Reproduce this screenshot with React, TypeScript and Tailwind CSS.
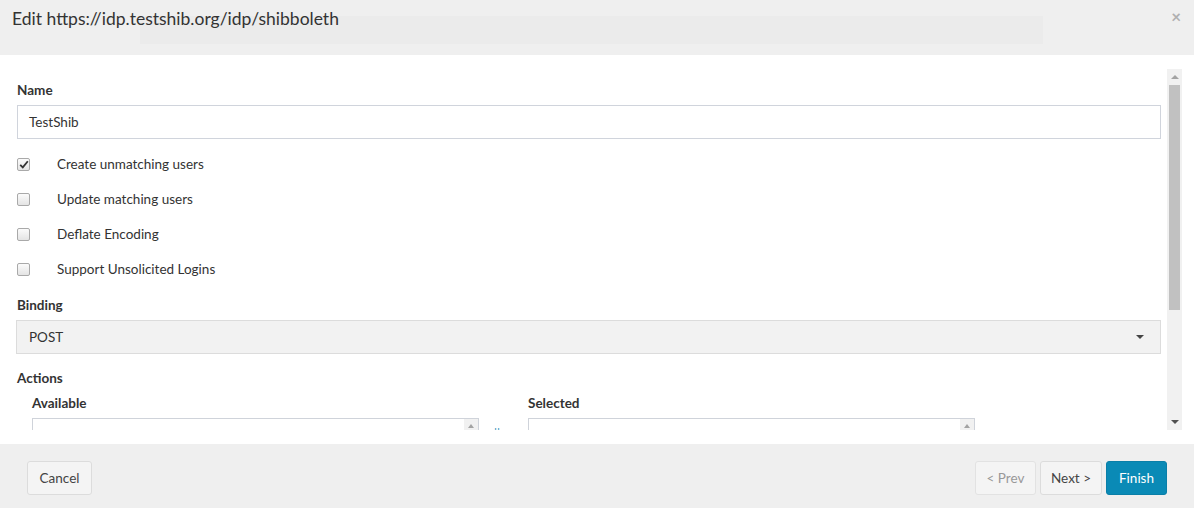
import React from 'react';

const checks = [
  { label: 'Create unmatching users', checked: true },
  { label: 'Update matching users', checked: false },
  { label: 'Deflate Encoding', checked: false },
  { label: 'Support Unsolicited Logins', checked: false },
];

const Box: React.FC<{ checked: boolean }> = ({ checked }) => (
  <span className="flex h-[13px] w-[13px] items-center justify-center rounded-[2px] border border-[#a9a9a9] bg-gradient-to-b from-[#fbfbfb] to-[#e4e4e4]">
    {checked && (
      <svg width="10" height="9" viewBox="0 0 10 9">
        <path d="M1.2 4.8 L3.8 7.4 L8.8 1.2" fill="none" stroke="#333" strokeWidth="1.8" />
      </svg>
    )}
  </span>
);

const ListBox: React.FC<{ text?: string }> = ({ text }) => (
  <div className="relative h-[60px] w-[447px] overflow-hidden border border-[#cfd3da] bg-white">
    {text && <div className="pl-2 pr-[20px] pt-[8px] text-[13px] text-[#555] whitespace-nowrap overflow-hidden">{text}</div>}
    <div className="absolute right-0 top-0 flex h-[14px] w-[14px] items-center justify-center bg-[#f1f1f1]">
      <span className="border-x-[3.5px] border-b-[4px] border-x-transparent border-b-[#a3a3a3]" />
    </div>
  </div>
);

export default function App() {
  return (
    <div className="flex h-[508px] w-[1194px] flex-col bg-white text-[#333]" style={{ fontFamily: 'Lato, "Liberation Sans", sans-serif' }}>
      {/* header */}
      <div className="relative flex h-[55px] shrink-0 items-start bg-[#efefef] px-[12px] pt-[7px]">
        <div className="absolute left-[140px] top-[16px] h-[28px] w-[903px] bg-[#ebebeb]" />
        <h4 className="relative text-[17.5px] leading-[24px] text-[#333]">Edit https://idp.testshib.org/idp/shibboleth</h4>
        <span className="absolute right-[13px] top-[4px] text-[17px] font-bold text-[#b0b0b0]">×</span>
      </div>

      {/* body */}
      <div className="flex h-[389px] shrink-0 px-[12px] pt-[14px]">
        <div className="h-[361px] flex-1 overflow-hidden pl-[5px] pr-[6px] pt-[11px]">
          <div className="text-[13.5px] font-bold leading-[20px]">Name</div>
          <div className="mt-[5px] flex h-[34px] items-center border border-[#d0d4dc] px-[11px] text-[13.5px]">TestShib</div>

          <div className="mt-[8px]">
            {checks.map((c) => (
              <div key={c.label} className="flex h-[35px] items-center">
                <Box checked={c.checked} />
                <span className="ml-[27px] text-[13.5px]">{c.label}</span>
              </div>
            ))}
          </div>

          <div className="mt-[8px] text-[13.5px] font-bold leading-[20px]">Binding</div>
          <div className="mt-[5px] -ml-px flex h-[34px] items-center justify-between border border-[#dcdcdc] bg-[#f2f2f2] pl-[12px] pr-[16px] text-[13.5px]">
            <span>POST</span>
            <span className="border-x-[4px] border-t-[4px] border-x-transparent border-t-[#444]" />
          </div>

          <div className="mt-[14px] text-[13.5px] font-bold leading-[20px]">Actions</div>
          <div className="mt-[5px] flex pl-[15px]">
            <div>
              <div className="text-[13.5px] font-bold leading-[20px]">Available</div>
              <div className="mt-[5px]">
                <ListBox text="manage-account  view-profile  manage-account-links  uma_authorization  offline_access" />
              </div>
            </div>
            <div className="ml-[15px] pt-[32px] text-[12px] leading-[16px] text-[#1a8ab5]">||</div>
            <div className="ml-[28px]">
              <div className="text-[13.5px] font-bold leading-[20px]">Selected</div>
              <div className="mt-[5px]">
                <ListBox />
              </div>
            </div>
          </div>
        </div>

        {/* scrollbar */}
        <div className="flex h-[361px] w-[15px] shrink-0 flex-col items-center bg-[#f1f1f1]">
          <div className="flex h-[16px] items-center justify-center">
            <span className="border-x-[4px] border-b-[4px] border-x-transparent border-b-[#a3a3a3]" />
          </div>
          <div className="h-[225px] w-[11px] bg-[#c1c1c1]" />
          <div className="flex-1" />
          <div className="flex h-[16px] items-center justify-center">
            <span className="border-x-[4px] border-t-[4px] border-x-transparent border-t-[#505050]" />
          </div>
        </div>
      </div>

      {/* footer */}
      <div className="flex flex-1 items-start justify-between bg-[#efefef] px-[27px] pt-[17px]">
        <button className="h-[34px] w-[65px] rounded-[3px] border border-[#dcdcdc] bg-[#f4f4f4] text-[13.5px] text-[#444]">Cancel</button>
        <div className="flex gap-[4px]">
          <button className="h-[34px] w-[61px] rounded-[3px] border border-[#e2e2e2] bg-[#f4f4f4] text-[13.5px] text-[#999]">&lt; Prev</button>
          <button className="h-[34px] w-[62px] rounded-[3px] border border-[#dcdcdc] bg-[#f4f4f4] text-[13.5px] text-[#444]">Next &gt;</button>
          <button className="h-[34px] w-[61px] rounded-[3px] border border-[#0a7fa8] bg-[#0a8ab6] text-[13.5px] text-white">Finish</button>
        </div>
      </div>
    </div>
  );
}
